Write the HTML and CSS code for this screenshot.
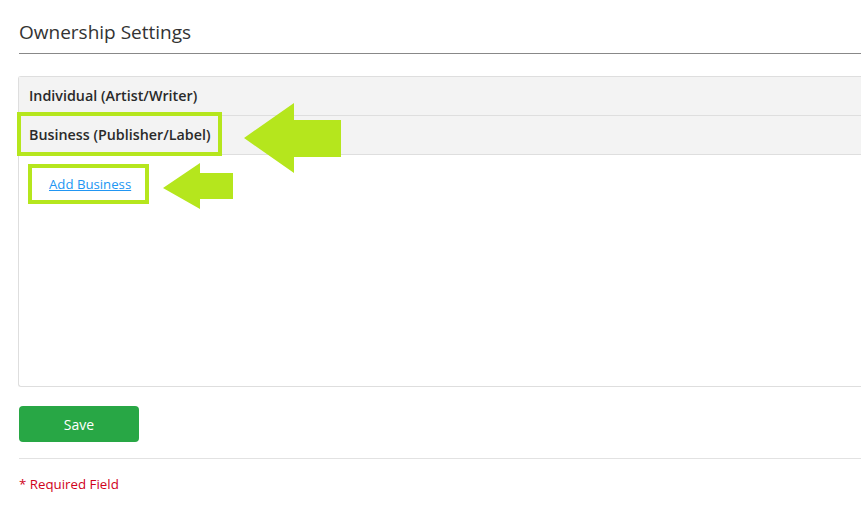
FILE: index.html
```html
<!DOCTYPE html>
<html>
<head>
<meta charset="utf-8">
<link rel="stylesheet" href="styles.css">
</head>
<body>
<div class="page">
  <h2 class="title">Ownership Settings</h2>
  <div class="panel">
    <div class="row">Individual (Artist/Writer)</div>
    <div class="row">Business (Publisher/Label)</div>
    <div class="body">
      <a class="link" href="#">Add Business</a>
    </div>
  </div>
  <button class="save">Save</button>
  <div class="sep"></div>
  <div class="req">* Required Field</div>
</div>
<div class="hl hl-1"></div>
<div class="hl hl-2"></div>
<svg class="arrow arrow-1" width="100" height="72" viewBox="0 0 100 72">
  <polygon points="0,35 50,0 50,17 97,17 97,54 50,54 50,70" fill="#b5e61d"/>
</svg>
<svg class="arrow arrow-2" width="72" height="48" viewBox="0 0 72 48">
  <polygon points="0,25 37,0 37,10 70,10 70,36 37,36 37,46" fill="#b5e61d"/>
</svg>
</body>
</html>
```
FILE: styles.css
```css
html, body {
  margin: 0;
  padding: 0;
  background: #fff;
  overflow: hidden;
}
body {
  font-family: "Open Sans", "Noto Sans", sans-serif;
  color: #333;
  width: 861px;
  height: 527px;
  position: relative;
}
.page {
  padding: 19px 0 0 19px;
  width: 842px;
}
.title {
  margin: 0;
  font-size: 19px;
  font-weight: 400;
  line-height: 26px;
  color: #333;
  padding-bottom: 8px;
  border-bottom: 1px solid #888;
}
.panel {
  margin-top: 22px;
  margin-left: -1px;
  border: 1px solid #dedede;
  border-right: none;
  border-radius: 3px 0 0 3px;
  height: 309px;
  display: flex;
  flex-direction: column;
}
.row {
  background: #f3f3f3;
  height: 38px;
  line-height: 38px;
  padding-left: 10px;
  font-size: 14.3px;
  font-weight: 600;
  color: #2a2a2a;
  border-bottom: 1px solid #dedede;
}
.body {
  flex: 1;
  padding: 17px 0 0 30px;
}
.link {
  font-size: 13.2px;
  color: #2196f3;
  text-decoration: underline;
}
.save {
  display: block;
  margin-top: 19px;
  width: 120px;
  height: 36px;
  background: #28a745;
  border: none;
  border-radius: 4px;
  color: #fff;
  font-family: "Open Sans", "Noto Sans", sans-serif;
  font-size: 14px;
}
.sep {
  margin-top: 16px;
  border-top: 1px solid #e2e2e2;
}
.req {
  margin-top: 16px;
  font-size: 13.3px;
  color: #d0021b;
}
.hl {
  position: absolute;
  border: 4px solid #b5e61d;
  box-sizing: border-box;
}
.hl-1 {
  left: 17px;
  top: 112px;
  width: 205px;
  height: 44px;
}
.hl-2 {
  left: 28px;
  top: 164px;
  width: 121px;
  height: 40px;
}
.arrow {
  position: absolute;
}
.arrow-1 {
  left: 244px;
  top: 103px;
}
.arrow-2 {
  left: 163px;
  top: 163px;
}
```
